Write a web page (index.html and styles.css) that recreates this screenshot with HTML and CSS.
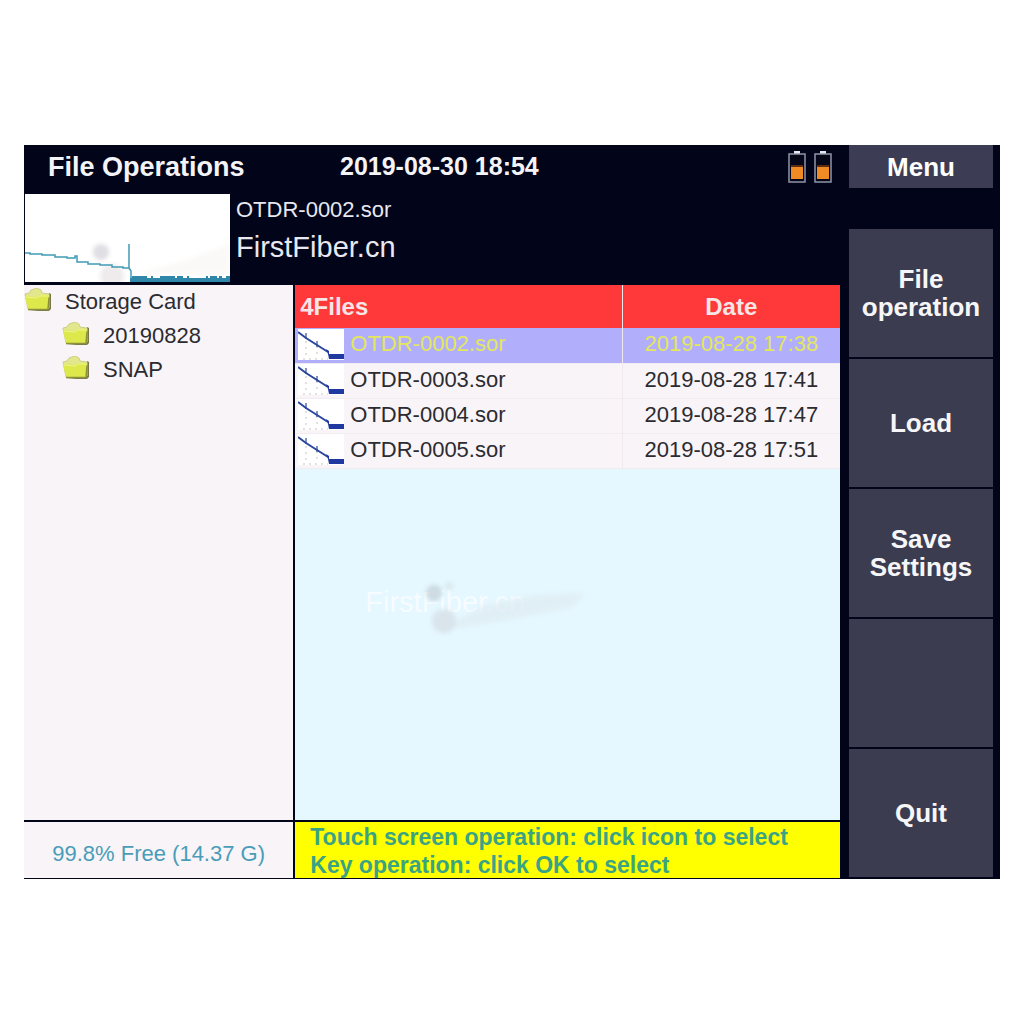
FILE: index.html
```html
<!DOCTYPE html>
<html lang="en">

<head>
    <meta charset="UTF-8">
    <meta name="viewport" content="width=device-width, initial-scale=1.0">
    <title>File Operations</title>
    <link rel="stylesheet" href="styles.css">
</head>

<body>
    <!-- shared icons -->
    <svg class="sprite" aria-hidden="true">
        <symbol id="folder" viewBox="0 0 28 24">
            <path d="M4 23h21l2-2V6l-2-1v16z" fill="#77784a" />
            <path d="M1 6l4-1 2-3 6-2 4 2 1 3 7 1v14L4 21z" fill="#e2e68c" stroke="#cdcf86" />
            <path d="M1 8l12 1 3-2h9l-1 14H4z" fill="#dde94a" />
            <path d="M2 9l11 1 3-2h9" fill="none" stroke="#f0f48c" />
            <path d="M4 21.500h20l1-12" fill="none" stroke="#8d913c" stroke-width="1.500" />
        </symbol>
        <symbol id="trace" viewBox="0 0 46 31">
            <rect width="46" height="31" fill="#fff" />
            <path d="M8 12v17M19 17v12M5 30h25" stroke="#c4c4bc" stroke-dasharray="2 4" />
            <path d="M8 4v6M19 12v6" stroke="#5a70b4" stroke-width="1.500" />
            <path d="M0 3l8 6 11 7 11 7" fill="none" stroke="#2b479d" stroke-width="2" />
            <path d="M28 20l3 2v3h15v5H31l-1-5z" fill="#2039a0" />
        </symbol>
        <symbol id="battery" viewBox="0 0 18 32">
            <rect x="6" y="0" width="6" height="3" fill="#e8e8f0" />
            <rect x="1" y="3" width="16" height="28" fill="#050719" stroke="#9095a8" stroke-width="1.500" />
            <rect x="3" y="14" width="12" height="2" fill="#5d2a12" />
            <rect x="3" y="16" width="12" height="12" fill="#f08a24" />
        </symbol>
    </svg>

    <main class="screen">
        <div class="content">
            <header class="topbar">
                <h1>File Operations</h1>
                <time class="clock" datetime="2019-08-30T18:54">2019-08-30 18:54</time>
                <div class="batteries">
                    <svg class="battery"><use href="#battery" /></svg>
                    <svg class="battery"><use href="#battery" /></svg>
                </div>
            </header>

            <section class="preview">
                <svg class="preview-trace" viewBox="0 0 205 88">
                    <rect width="205" height="88" fill="#fff" />
                    <g class="smudge">
                        <circle cx="76" cy="58" r="8" fill="#dedee3" />
                        <circle cx="87" cy="82" r="12" fill="#efebed" />
                        <path d="M110 80l45-12 50-18v30z" fill="#fbf9f8" />
                    </g>
                    <path d="M0 59h5v1h12v1h13v2h12v1h8v-2h2v6h11v2h12v1h12v2h11v1h6V50v24l2 3v8" fill="none" stroke="#3f9bb4" stroke-width="1.500" />
                    <path d="M105 86h100" fill="none" stroke="#2f87aa" stroke-width="4" />
                    <path d="M107 83h15M126 83h2M135 83h15M152 83h6M162 83h2M181 83h2M185 83h7M194 83h3M201 83h4" stroke="#2f87aa" stroke-width="2" />
                </svg>
                <div class="preview-info">
                    <p class="preview-name">OTDR-0002.sor</p>
                    <p class="preview-site">FirstFiber.cn</p>
                </div>
            </section>

            <div class="panes">
                <nav class="tree">
                    <ul>
                        <li>
                            <button type="button" class="node"><svg class="folder"><use href="#folder" /></svg>Storage Card</button>
                            <ul class="children">
                                <li><button type="button" class="node"><svg class="folder"><use href="#folder" /></svg>20190828</button></li>
                                <li><button type="button" class="node"><svg class="folder"><use href="#folder" /></svg>SNAP</button></li>
                            </ul>
                        </li>
                    </ul>
                </nav>

                <section class="files">
                    <table>
                        <thead>
                            <tr>
                                <th class="col-name">4Files</th>
                                <th class="col-date">Date</th>
                            </tr>
                        </thead>
                        <tbody>
                            <tr class="selected">
                                <td><div class="file"><svg class="thumb"><use href="#trace" /></svg>OTDR-0002.sor</div></td>
                                <td class="col-date">2019-08-28 17:38</td>
                            </tr>
                            <tr>
                                <td><div class="file"><svg class="thumb"><use href="#trace" /></svg>OTDR-0003.sor</div></td>
                                <td class="col-date">2019-08-28 17:41</td>
                            </tr>
                            <tr>
                                <td><div class="file"><svg class="thumb"><use href="#trace" /></svg>OTDR-0004.sor</div></td>
                                <td class="col-date">2019-08-28 17:47</td>
                            </tr>
                            <tr>
                                <td><div class="file"><svg class="thumb"><use href="#trace" /></svg>OTDR-0005.sor</div></td>
                                <td class="col-date">2019-08-28 17:51</td>
                            </tr>
                        </tbody>
                    </table>
                    <div class="watermark">
                        <span>FirstFiber.cn</span>
                        <svg class="watermark-mark smudge" viewBox="0 0 230 60">
                            <path d="M90 40l30-16 50-10 50-2-12 14-60 12-60 10z" fill="#e0eef3" />
                            <circle cx="69" cy="12" r="8" fill="#c6d3db" />
                            <circle cx="84" cy="5" r="4" fill="#d9e6ea" />
                            <circle cx="79" cy="40" r="12" fill="#d7e0e7" />
                        </svg>
                    </div>
                </section>

                <p class="free">99.8% Free (14.37 G)</p>
                <p class="hint">Touch screen operation: click icon to select<br>Key operation: click OK to select</p>
            </div>
        </div>

        <aside class="menu">
            <h2>Menu</h2>
            <button type="button">File<br>operation</button>
            <button type="button">Load</button>
            <button type="button">Save<br>Settings</button>
            <button type="button" disabled></button>
            <button type="button">Quit</button>
        </aside>
    </main>
</body>

</html>
```

FILE: styles.css
```css
* {
    box-sizing: border-box;
}

body {
    margin: 145px 24px;
    background-color: #fff;
    font-family: "Liberation Sans", Arial, sans-serif;
    font-size: 22px;
    color: #2b2b30;
}

h1,
h2,
p,
ul {
    margin: 0;
    padding: 0;
}

ul {
    list-style: none;
}

button {
    border: 0;
    font-family: inherit;
    cursor: pointer;
}

.sprite {
    display: none;
}

.smudge {
    filter: blur(2px);
}

.screen {
    display: grid;
    grid-template-columns: 1fr 144px;
    gap: 9px;
    padding-right: 7px;
    background-color: #02041a;
}

.content {
    display: flex;
    flex-direction: column;
}

/* top bar */
.topbar {
    display: grid;
    grid-template-columns: 292px 1fr auto;
    align-items: center;
    height: 49px;
    padding: 0 8px 6px 24px;
    color: #f4f4f8;
}

h1 {
    font-size: 27px;
    line-height: 28px;
}

.clock {
    font-size: 25px;
    font-weight: bold;
}

.batteries {
    display: flex;
    gap: 8px;
}

.battery {
    width: 18px;
    height: 32px;
}

/* selected file preview */
.preview {
    display: flex;
    gap: 6px;
    height: 91px;
    padding-left: 1px;
    color: #e8e8f0;
}

.preview-trace {
    width: 205px;
    height: 88px;
}

.preview-name {
    line-height: 32px;
}

.preview-site {
    font-size: 29px;
    line-height: 42px;
}

/* folder tree and file list */
.panes {
    flex: 1;
    display: grid;
    grid-template-columns: 33% 1fr;
    grid-template-rows: 1fr 56px;
    gap: 2px;
    padding-bottom: 1px;
}

.tree,
.free {
    background-color: #f8f4f8;
}

.node {
    display: flex;
    align-items: center;
    gap: 13px;
    height: 34px;
    padding: 0;
    background: none;
    font-size: 22px;
    color: #2b2b30;
}

.folder {
    width: 28px;
    height: 24px;
    margin-bottom: 4px;
}

.children {
    padding-left: 38px;
}

.files {
    display: flex;
    flex-direction: column;
    background-color: #e5f7ff;
}

table {
    width: 100%;
    border-collapse: collapse;
    table-layout: fixed;
}

th {
    height: 43px;
    padding: 0 0 0 5px;
    background-color: #ff3939;
    color: #f6e6e6;
    font-size: 24px;
    text-align: left;
}

th.col-name {
    width: 60%;
}

td {
    height: 35px;
    padding: 0 0 2px;
    background-color: #f8f4f8;
    border-bottom: 1px solid #f1ecf0;
}

th.col-date,
td.col-date {
    padding-left: 0;
    border-left: 1px solid #f1e8ec;
    text-align: center;
}

.selected td {
    background-color: #b1affc;
    color: #e4e65c;
}

.file {
    display: flex;
    align-items: center;
    gap: 6px;
    padding-left: 3px;
}

.thumb {
    width: 46px;
    height: 31px;
}

.watermark {
    position: relative;
    width: 230px;
    margin: 112px auto 0 70px;
    color: #f6fcff;
    font-size: 29px;
    line-height: 42px;
}

.watermark-mark {
    position: absolute;
    top: 0;
    left: 0;
    width: 230px;
    height: 60px;
    opacity: 0.8;
}

.free {
    padding: 4px 0 0;
    line-height: 56px;
    text-align: center;
    color: #4a9db8;
}

.hint {
    padding: 1px 0 0 15px;
    background-color: #ff0;
    color: #3aa384;
    font-size: 23px;
    font-weight: bold;
    line-height: 28px;
    white-space: nowrap;
}

/* soft key menu */
.menu {
    display: flex;
    flex-direction: column;
    gap: 2px;
    padding-bottom: 2px;
}

.menu h2 {
    margin-bottom: 39px;
    padding: 8px 0 7px;
    background-color: #3c3d55;
    color: #fff;
    font-size: 26px;
    line-height: 28px;
    text-align: center;
}

.menu button {
    height: 128px;
    background-color: #3c3c50;
    color: #f6f6f8;
    font-size: 26px;
    font-weight: bold;
    line-height: 28px;
}
```
